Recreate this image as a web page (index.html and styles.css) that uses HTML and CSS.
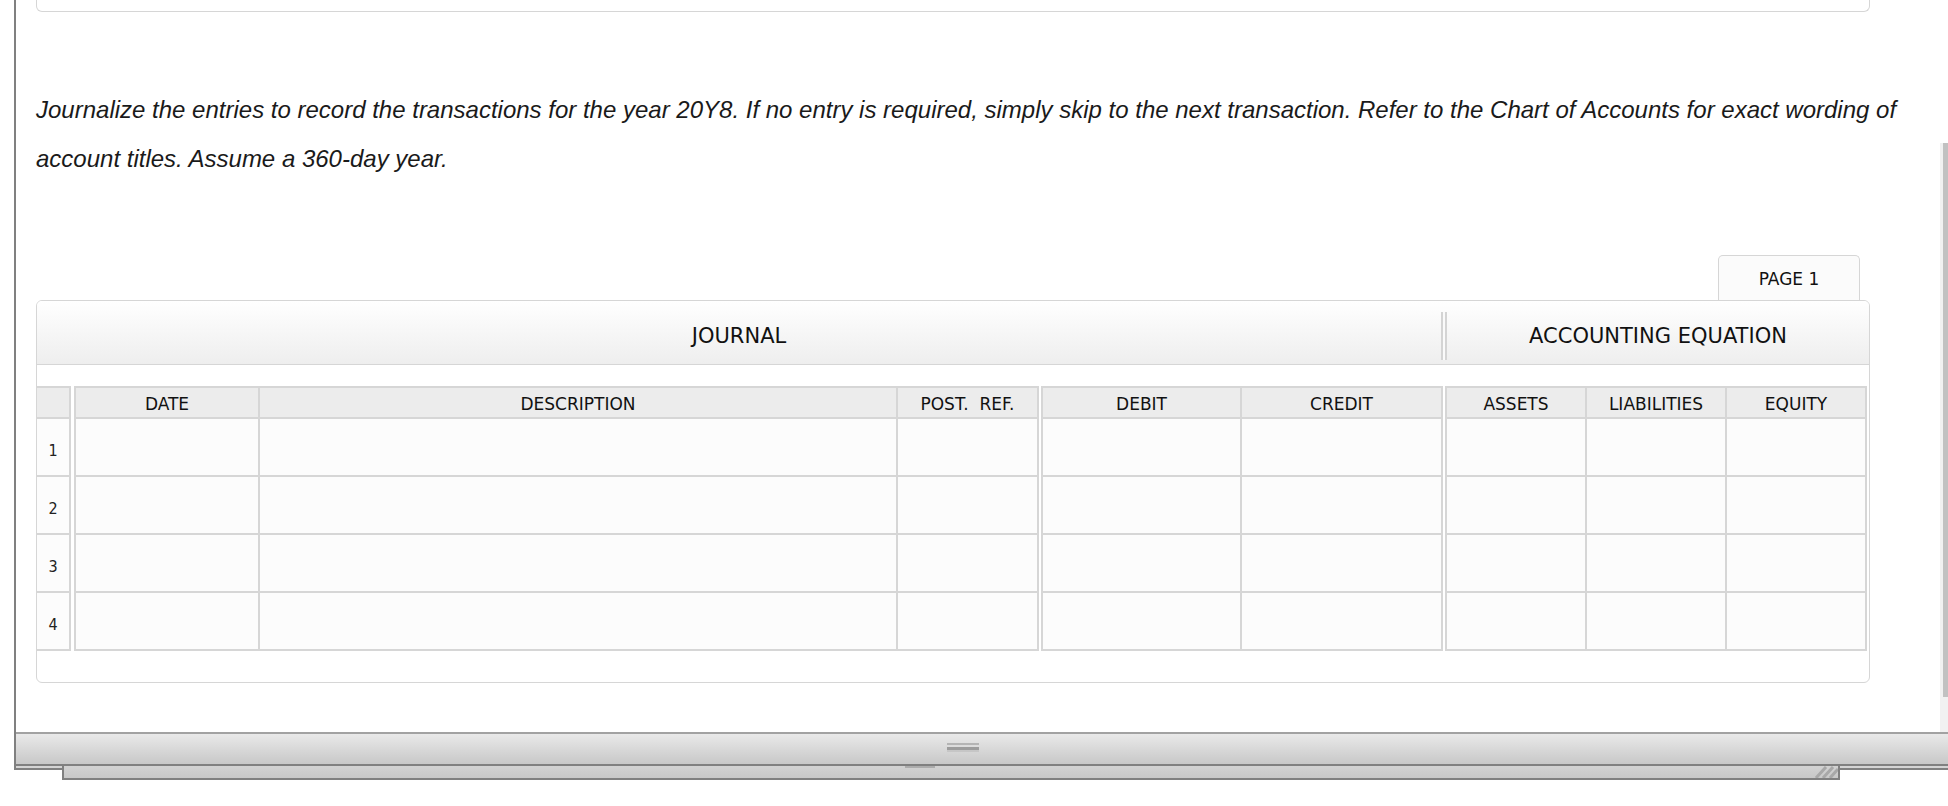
FILE: index.html
```html
<!DOCTYPE html>
<html>
<head>
<meta charset="utf-8">
<title>Journal</title>
<link rel="stylesheet" href="styles.css">
</head>
<body>
<div class="window">
  <div class="window-body">
    <div class="viewport">
      <div class="content">
        <div class="prev-box"></div>
        <p class="instructions">Journalize the entries to record the transactions for the year 20Y8. If no entry is required, simply skip to the next transaction. Refer to the Chart of Accounts for exact wording of account titles. Assume a 360-day year.</p>
        <div class="tabs"><div class="tab">PAGE 1</div></div>
        <div class="journal">
          <div class="jheader">
            <div class="jh-journal">JOURNAL</div>
            <div class="jh-divider"></div>
            <div class="jh-eq">ACCOUNTING EQUATION</div>
          </div>
          <div class="grid-wrap">
            <div class="grp grp-num">
              <div class="hc"></div>
              <div class="rn">1</div>
              <div class="rn">2</div>
              <div class="rn">3</div>
              <div class="rn">4</div>
            </div>
            <div class="grp grp-j">
              <div class="hc">DATE</div><div class="hc">DESCRIPTION</div><div class="hc">POST.&nbsp; REF.</div>
              <div class="c"></div><div class="c"></div><div class="c"></div>
              <div class="c"></div><div class="c"></div><div class="c"></div>
              <div class="c"></div><div class="c"></div><div class="c"></div>
              <div class="c"></div><div class="c"></div><div class="c"></div>
            </div>
            <div class="grp grp-dc">
              <div class="hc">DEBIT</div><div class="hc">CREDIT</div>
              <div class="c"></div><div class="c"></div>
              <div class="c"></div><div class="c"></div>
              <div class="c"></div><div class="c"></div>
              <div class="c"></div><div class="c"></div>
            </div>
            <div class="grp grp-eq">
              <div class="hc">ASSETS</div><div class="hc">LIABILITIES</div><div class="hc">EQUITY</div>
              <div class="c"></div><div class="c"></div><div class="c"></div>
              <div class="c"></div><div class="c"></div><div class="c"></div>
              <div class="c"></div><div class="c"></div><div class="c"></div>
              <div class="c"></div><div class="c"></div><div class="c"></div>
            </div>
          </div>
        </div>
      </div>
      <div class="scrollbar"><div class="track"><div class="thumb"></div></div></div>
    </div>
    <div class="statusbar"><span class="grip"></span></div>
  </div>
  <div class="window-foot">
    <div class="foot-left"></div>
    <div class="foot-mid">
      <span class="foot-shadow"></span>
      <svg class="resize" width="26" height="12" viewBox="0 0 26 12">
        <path d="M4 12 L14 1 M11 12 L21 1 M18 12 L26 3" stroke="#a8a8a8" stroke-width="3" fill="none"/>
      </svg>
    </div>
    <div class="foot-right"></div>
  </div>
</div>
</body>
</html>
```

FILE: styles.css
```css
html, body {
  margin: 0;
  padding: 0;
  background: #ffffff;
}
body {
  width: 1948px;
  height: 806px;
  overflow: hidden;
}
.window {
  margin-left: 14px;
  width: 1934px;
}
.window-body {
  border-left: 2px solid #808080;
}
.viewport {
  display: flex;
  height: 732px;
}
.content {
  flex: 1;
  padding-left: 20px;
}
.prev-box {
  box-sizing: border-box;
  width: 1834px;
  height: 12px;
  border: 1px solid #d6d6d6;
  border-top: none;
  border-radius: 0 0 6px 6px;
}
.instructions {
  margin: 73px 0 0 0;
  width: 1880px;
  font-family: "Liberation Sans", Arial, sans-serif;
  font-style: italic;
  font-size: 24px;
  line-height: 49px;
  color: #1a1a1a;
}
.tabs {
  display: flex;
  justify-content: flex-end;
  width: 1834px;
  padding-right: 10px;
  box-sizing: border-box;
  margin-top: 72px;
}
.tab {
  box-sizing: border-box;
  width: 142px;
  height: 45px;
  border: 1px solid #d6d6d6;
  border-bottom: none;
  border-radius: 5px 5px 0 0;
  background: #fbfbfb;
  text-align: center;
  line-height: 46px;
  font-family: "DejaVu Sans", Verdana, sans-serif;
  font-size: 17px;
  color: #111111;
}
.journal {
  box-sizing: border-box;
  width: 1834px;
  height: 383px;
  border: 1px solid #d6d6d6;
  border-radius: 6px;
  font-family: "DejaVu Sans", Verdana, sans-serif;
  color: #111111;
}
.jheader {
  display: flex;
  height: 64px;
  box-sizing: border-box;
  border-bottom: 1px solid #d6d6d6;
  background: linear-gradient(#ffffff, #eeeeee);
  border-radius: 5px 5px 0 0;
  font-size: 21px;
  line-height: 71px;
}
.jh-journal {
  width: 1404px;
  text-align: center;
}
.jh-divider {
  width: 2px;
  height: 48px;
  margin-top: 11px;
  border-left: 2px solid #d4d4d4;
  border-right: 2px solid #d4d4d4;
  background: #fafafa;
}
.jh-eq {
  flex: 1;
  text-align: center;
}
.grid-wrap {
  display: flex;
  margin-top: 21px;
}
.grp {
  display: grid;
  grid-template-rows: 31px repeat(4, 58px);
  border-top: 2px solid #d6d6d6;
}
.grp-num {
  grid-template-columns: 34px;
}
.grp-j {
  margin-left: 3px;
  border-left: 2px solid #d6d6d6;
  grid-template-columns: 184px 638px 141px;
}
.grp-dc {
  margin-left: 2px;
  border-left: 2px solid #d6d6d6;
  grid-template-columns: 199px 201px;
}
.grp-eq {
  margin-left: 2px;
  border-left: 2px solid #d6d6d6;
  grid-template-columns: 140px 140px 140px;
}
.hc, .c, .rn {
  box-sizing: border-box;
  border-right: 2px solid #d6d6d6;
  border-bottom: 2px solid #d6d6d6;
}
.hc {
  background: #ececec;
  text-align: center;
  font-size: 17px;
  line-height: 32px;
}
.c {
  background: #fcfcfc;
}
.rn {
  background: #fcfcfc;
  text-align: center;
  font-family: "DejaVu Sans Condensed", "DejaVu Sans", sans-serif;
  font-stretch: condensed;
  font-size: 16px;
  line-height: 63px;
  color: #222222;
}
.scrollbar {
  width: 8px;
  padding-top: 143px;
  box-sizing: border-box;
}
.track {
  height: 589px;
  background: #f1f1f1;
}
.thumb {
  margin-left: 3px;
  width: 5px;
  height: 554px;
  background: #c1c1c1;
}
.statusbar {
  box-sizing: border-box;
  height: 34px;
  border-top: 2px solid #a2a2a2;
  border-bottom: 2px solid #808080;
  background: linear-gradient(#e9e9e9, #c8c8c8);
  padding-left: 931px;
}
.grip {
  display: block;
  width: 32px;
  height: 9px;
  margin-top: 9px;
  background: linear-gradient(#b4b4b4 0 2px, #dcdcdc 2px 4px, #9c9c9c 4px 7px, #c6c6c6 7px 9px);
}
.window-foot {
  display: flex;
  align-items: flex-start;
}
.foot-left {
  box-sizing: border-box;
  width: 48px;
  height: 4px;
  border-left: 2px solid #808080;
  border-bottom: 2px solid #808080;
  background: #d4d4d4;
}
.foot-mid {
  box-sizing: border-box;
  width: 1778px;
  height: 14px;
  border: 2px solid #808080;
  border-top: none;
  background: linear-gradient(#d2d2d2, #c8c8c8);
  display: flex;
  align-items: flex-start;
}
.foot-shadow {
  display: block;
  margin-left: 841px;
  width: 30px;
  height: 2px;
  background: #acacac;
}
.resize {
  margin-left: auto;
  display: block;
}
.foot-right {
  box-sizing: border-box;
  flex: 1;
  height: 4px;
  border-bottom: 2px solid #808080;
  background: #d4d4d4;
}
```
